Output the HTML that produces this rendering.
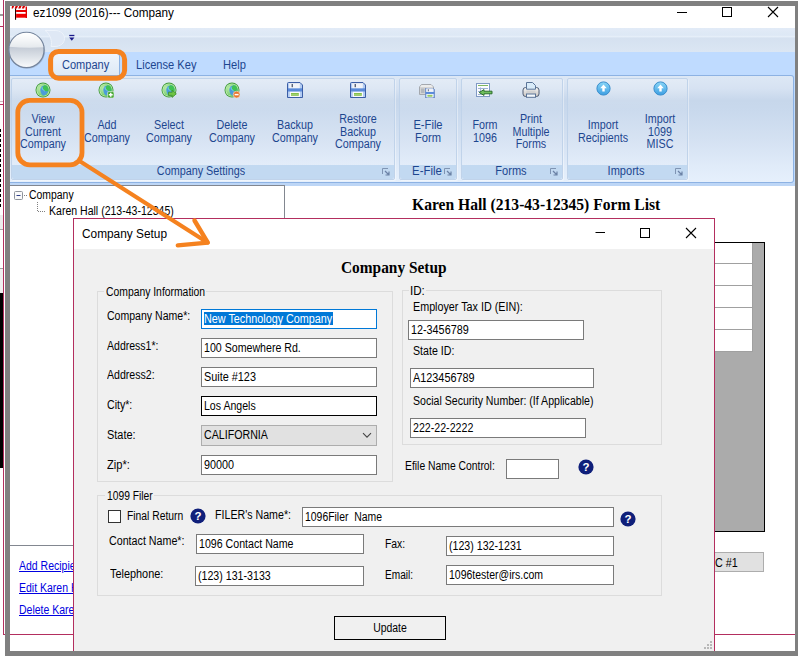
<!DOCTYPE html>
<html lang="en"><head><meta charset="utf-8"><title>ez1099 (2016)--- Company</title>
<style>
html,body{margin:0;padding:0;background:#fff}
#r{position:relative;width:798px;height:656px;overflow:hidden;background:#fff;font-family:"Liberation Sans",sans-serif;font-size:12px;color:#000}
#r>div,#r>svg,#r>span{position:absolute;display:block}
.t{white-space:nowrap;font-size:12px}
.ms{font-family:"Liberation Sans",sans-serif;color:#000}
.ui{font-family:"Liberation Sans",sans-serif;color:#000}
.rb{font-family:"Liberation Sans",sans-serif;color:#1d468f}
.hd{font-family:"Liberation Serif",serif;font-weight:bold;font-size:16px;color:#000}
.lk{color:#0000e0;text-decoration:underline}
</style></head>
<body><div id="r">
<div style="left:0px;top:0px;width:5px;height:656px;background:#fff"></div>
<div style="left:0px;top:14px;width:3px;height:2px;background:#9a9a9a"></div>
<div style="left:0px;top:26px;width:3px;height:1px;background:#b32e5e"></div>
<div style="left:0px;top:101px;width:3px;height:1px;background:#cdb8c0"></div>
<div style="left:0px;top:104px;width:3px;height:1px;background:#b32e5e"></div>
<div style="left:0px;top:129px;width:1px;height:80px;background:repeating-linear-gradient(to bottom,#000 0,#000 3px,#fff 3px,#fff 5px)"></div>
<div style="left:0px;top:215px;width:3px;height:14px;background:#ececec"></div>
<div style="left:0px;top:229px;width:3px;height:1px;background:#a8a8a8"></div>
<div style="left:0px;top:268px;width:3px;height:1px;background:#a0a0a0"></div>
<div style="left:0px;top:269px;width:3px;height:24px;background:#f0f0f0"></div>
<div style="left:0px;top:293px;width:3px;height:175px;background:#000"></div>
<div style="left:3px;top:0px;width:1px;height:635px;background:#b32e5e"></div>
<div style="left:5px;top:1px;width:793px;height:5px;background:#808080"></div>
<div style="left:5px;top:1px;width:5px;height:655px;background:#808080"></div>
<div style="left:5px;top:651px;width:793px;height:5px;background:#808080"></div>
<div style="left:795px;top:1px;width:3px;height:655px;background:#808080"></div>
<div style="left:10px;top:6px;width:785px;height:22px;background:#fff"></div>
<svg style="left:11px;top:5px" width="18" height="16" viewBox="0 0 18 16">
<path d="M1 1 h2.2 l-1.2 2.4 h-1.4 z M4.6 1 h2.4 l-1.2 2.4 h-2.2 z M8.2 1 h2.4 l-1.2 2.4 h-2.2 z M11.8 1 h2.4 l-1.2 2.4 h-2.2 z" fill="#d80000"/>
<rect x="4" y="3.4" width="1.1" height="11.4" fill="#2a0000"/>
<rect x="5.1" y="5" width="10.9" height="2" fill="#e60000"/>
<rect x="5.1" y="8.8" width="10.9" height="3.9" fill="#f20000"/>
<rect x="14.6" y="1.5" width="1.4" height="11.5" fill="#e00000"/>
</svg>
<span class="t ui" style="left:32.800000000000004px;top:6px;line-height:14px;transform:scaleX(0.9786);transform-origin:0 50%;">ez1099 (2016)--- Company</span>
<svg style="left:670px;top:6px" width="120" height="14" viewBox="0 0 120 14">
<path d="M7 6.5 H17" stroke="#000" stroke-width="1"/>
<rect x="52.5" y="1.5" width="9" height="9" fill="none" stroke="#000" stroke-width="1"/>
<path d="M98 1 L108 11 M108 1 L98 11" stroke="#000" stroke-width="1.1"/>
</svg>
<div style="left:10px;top:28px;width:785px;height:24px;background:linear-gradient(#e2ebf7 0,#dde8f5 30%,#e6eff9 36%,#d5e1f0 42%,#dbe6f3 100%)"></div>
<div style="left:10px;top:52px;width:785px;height:23px;background:#bfdbff"></div>
<div style="left:10px;top:75px;width:785px;height:111px;background:#bfdbff"></div>
<svg style="left:44px;top:29px" width="22" height="19" viewBox="0 0 22 19"><path d="M1 1.5 H11 C16.5 1.5 20.5 5 20.5 9.5 C20.5 14 16.5 17.5 11 17.5 H7 C8.5 13 6.5 5 1 1.5 Z" fill="#dfe8f5" stroke="#edf3fb" stroke-width="1"/></svg>
<svg style="left:69px;top:34px" width="6" height="8" viewBox="0 0 6 8"><path d="M0.2 1.5 H5.4" stroke="#1a1a8a" stroke-width="1.3"/><path d="M0.2 3.6 H5.4 L2.8 6.8 Z" fill="#1a1a8a"/></svg>
<div style="left:52px;top:53px;width:68px;height:23px;border:1px solid #8db2e3;border-bottom:none;border-radius:3px 3px 0 0;background:linear-gradient(#eef5fd,#dde8f5);box-sizing:border-box"></div>
<span class="t rb" style="left:62.2px;top:58px;line-height:14px;transform:scaleX(0.919);transform-origin:0 50%;">Company</span>
<span class="t rb" style="left:135.5px;top:58px;line-height:14px;transform:scaleX(0.925);transform-origin:0 50%;">License Key</span>
<span class="t rb" style="left:223px;top:58px;line-height:14px;transform:scaleX(0.93);transform-origin:0 50%;">Help</span>
<div style="left:10px;top:75px;width:784px;height:108px;border:1px solid #8db2e3;border-left:none;border-radius:0 3px 3px 0;box-sizing:border-box;background:linear-gradient(#dde8f5 0,#d6e2f2 12%,#c7d7eb 23%,#c9d9ed 34%,#d4e1f2 60%,#e0ebf9 85%,#e6f0fc 100%)"></div>
<div style="left:11px;top:78px;width:383.5px;height:101.5px;border:1px solid #c0d3ea;border-radius:2px;box-sizing:border-box;box-shadow:1px 1px 0 rgba(255,255,255,.4);background:linear-gradient(rgba(255,255,255,.22) 0,rgba(255,255,255,.12) 20%,rgba(255,255,255,.06) 30%,rgba(255,255,255,.1) 100%)"></div>
<div style="left:12px;top:164.5px;width:381.5px;height:14px;background:#c2d9f1;border-radius:0 0 2px 2px"></div>
<span class="t rb" style="left:200.5px;top:164px;line-height:14px;transform:translateX(-50%) scaleX(0.9);transform-origin:50% 50%;">Company Settings</span>
<svg style="left:381.5px;top:168px" width="8" height="8" viewBox="0 0 8 8"><path d="M0.5 6 V0.5 H6" stroke="#7f94b3" stroke-width="1" fill="none"/><path d="M3 3 L7 7 M7 3.5 V7 H3.5" stroke="#6b82a6" stroke-width="1.2" fill="none"/></svg>
<div style="left:398.5px;top:78px;width:58.0px;height:101.5px;border:1px solid #c0d3ea;border-radius:2px;box-sizing:border-box;box-shadow:1px 1px 0 rgba(255,255,255,.4);background:linear-gradient(rgba(255,255,255,.22) 0,rgba(255,255,255,.12) 20%,rgba(255,255,255,.06) 30%,rgba(255,255,255,.1) 100%)"></div>
<div style="left:399.5px;top:164.5px;width:56.0px;height:14px;background:#c2d9f1;border-radius:0 0 2px 2px"></div>
<span class="t rb" style="left:427px;top:164px;line-height:14px;transform:translateX(-50%) scaleX(0.95);transform-origin:50% 50%;">E-File</span>
<svg style="left:443.5px;top:168px" width="8" height="8" viewBox="0 0 8 8"><path d="M0.5 6 V0.5 H6" stroke="#7f94b3" stroke-width="1" fill="none"/><path d="M3 3 L7 7 M7 3.5 V7 H3.5" stroke="#6b82a6" stroke-width="1.2" fill="none"/></svg>
<div style="left:461px;top:78px;width:101.5px;height:101.5px;border:1px solid #c0d3ea;border-radius:2px;box-sizing:border-box;box-shadow:1px 1px 0 rgba(255,255,255,.4);background:linear-gradient(rgba(255,255,255,.22) 0,rgba(255,255,255,.12) 20%,rgba(255,255,255,.06) 30%,rgba(255,255,255,.1) 100%)"></div>
<div style="left:462px;top:164.5px;width:99.5px;height:14px;background:#c2d9f1;border-radius:0 0 2px 2px"></div>
<span class="t rb" style="left:510.6px;top:164px;line-height:14px;transform:translateX(-50%) scaleX(0.92);transform-origin:50% 50%;">Forms</span>
<svg style="left:549.5px;top:168px" width="8" height="8" viewBox="0 0 8 8"><path d="M0.5 6 V0.5 H6" stroke="#7f94b3" stroke-width="1" fill="none"/><path d="M3 3 L7 7 M7 3.5 V7 H3.5" stroke="#6b82a6" stroke-width="1.2" fill="none"/></svg>
<div style="left:567px;top:78px;width:120.5px;height:101.5px;border:1px solid #c0d3ea;border-radius:2px;box-sizing:border-box;box-shadow:1px 1px 0 rgba(255,255,255,.4);background:linear-gradient(rgba(255,255,255,.22) 0,rgba(255,255,255,.12) 20%,rgba(255,255,255,.06) 30%,rgba(255,255,255,.1) 100%)"></div>
<div style="left:568px;top:164.5px;width:118.5px;height:14px;background:#c2d9f1;border-radius:0 0 2px 2px"></div>
<span class="t rb" style="left:626px;top:164px;line-height:14px;transform:translateX(-50%) scaleX(0.92);transform-origin:50% 50%;">Imports</span>
<svg style="left:674.5px;top:168px" width="8" height="8" viewBox="0 0 8 8"><path d="M0.5 6 V0.5 H6" stroke="#7f94b3" stroke-width="1" fill="none"/><path d="M3 3 L7 7 M7 3.5 V7 H3.5" stroke="#6b82a6" stroke-width="1.2" fill="none"/></svg>
<div class="t rb" style="left:43.3px;top:113.0px;line-height:12.6px;text-align:center;transform:translateX(-50%) scaleX(0.895);transform-origin:50% 50%">View<br>Current<br>Company</div>
<div class="t rb" style="left:106.5px;top:119.30000000000001px;line-height:12.6px;text-align:center;transform:translateX(-50%) scaleX(0.895);transform-origin:50% 50%">Add<br>Company</div>
<div class="t rb" style="left:169px;top:119.30000000000001px;line-height:12.6px;text-align:center;transform:translateX(-50%) scaleX(0.895);transform-origin:50% 50%">Select<br>Company</div>
<div class="t rb" style="left:232px;top:119.30000000000001px;line-height:12.6px;text-align:center;transform:translateX(-50%) scaleX(0.895);transform-origin:50% 50%">Delete<br>Company</div>
<div class="t rb" style="left:295px;top:119.30000000000001px;line-height:12.6px;text-align:center;transform:translateX(-50%) scaleX(0.895);transform-origin:50% 50%">Backup<br>Company</div>
<div class="t rb" style="left:358px;top:113.0px;line-height:12.6px;text-align:center;transform:translateX(-50%) scaleX(0.895);transform-origin:50% 50%">Restore<br>Backup<br>Company</div>
<div class="t rb" style="left:427.5px;top:119.30000000000001px;line-height:12.6px;text-align:center;transform:translateX(-50%) scaleX(0.93);transform-origin:50% 50%">E-File<br>Form</div>
<div class="t rb" style="left:484.5px;top:119.30000000000001px;line-height:12.6px;text-align:center;transform:translateX(-50%) scaleX(0.895);transform-origin:50% 50%">Form<br>1096</div>
<div class="t rb" style="left:531px;top:113.0px;line-height:12.6px;text-align:center;transform:translateX(-50%) scaleX(0.895);transform-origin:50% 50%">Print<br>Multiple<br>Forms</div>
<div class="t rb" style="left:603.4px;top:119.30000000000001px;line-height:12.6px;text-align:center;transform:translateX(-50%) scaleX(0.895);transform-origin:50% 50%">Import<br>Recipients</div>
<div class="t rb" style="left:659.5px;top:113.0px;line-height:12.6px;text-align:center;transform:translateX(-50%) scaleX(0.895);transform-origin:50% 50%">Import<br>1099<br>MISC</div>
<svg width="0" height="0" style="position:absolute"><defs>
<radialGradient id="gg" cx="30%" cy="35%" r="80%"><stop offset="0" stop-color="#bdecac"/><stop offset="1" stop-color="#63c561"/></radialGradient>
<linearGradient id="ct" x1="1" y1="0" x2="0.2" y2="1"><stop offset="0" stop-color="#35b843"/><stop offset="0.35" stop-color="#3fae6e"/><stop offset="0.6" stop-color="#4a9bd6"/><stop offset="1" stop-color="#3f8fd2"/></linearGradient>
<linearGradient id="bl" x1="0" y1="0" x2="0" y2="1"><stop offset="0" stop-color="#8ad6f7"/><stop offset="1" stop-color="#3d9fe2"/></linearGradient>
<linearGradient id="fl" x1="0" y1="0" x2="0" y2="1"><stop offset="0" stop-color="#5d8fe0"/><stop offset="1" stop-color="#80aaf0"/></linearGradient>
</defs></svg>
<svg style="left:35px;top:82px" width="16" height="16" viewBox="0 0 16 16">
<circle cx="8" cy="8" r="7.5" fill="#3f993b"/>
<circle cx="8" cy="8" r="6.6" fill="#c6efb0"/>
<circle cx="8" cy="8" r="5.9" fill="url(#gg)"/>
<path d="M6.2 5 C7.5 3.6 9.5 3.2 11 3.6 C12.6 4.6 13.4 6.4 13.4 8 C13.2 9.6 12.6 10.8 11.6 11.8 C10.8 12.8 9.6 13.4 8.4 13.4 C7.2 13.2 6.4 12.2 6 11 C5.4 9.6 5.2 8 5.4 6.8 Z" fill="#4b9cd9"/>
<path d="M9.2 3.4 C10.6 3.2 12 4 12.8 5.2 C13.4 6.4 13.6 7.8 13.2 9 C12.2 9.6 10.8 9.4 9.8 8.8 C8.6 8 7.6 7 7.6 6 C7.8 4.8 8.4 3.8 9.2 3.4 Z" fill="#3ec354"/>
<path d="M7 5.2 C7 6.6 8 8 9.6 9" stroke="#8edbe6" stroke-width="1" fill="none" opacity=".85"/>
</svg>
<svg style="left:98px;top:82px" width="16" height="16" viewBox="0 0 16 16">
<circle cx="8" cy="8" r="7.5" fill="#3f993b"/>
<circle cx="8" cy="8" r="6.6" fill="#c6efb0"/>
<circle cx="8" cy="8" r="5.9" fill="url(#gg)"/>
<path d="M6.2 5 C7.5 3.6 9.5 3.2 11 3.6 C12.6 4.6 13.4 6.4 13.4 8 C13.2 9.6 12.6 10.8 11.6 11.8 C10.8 12.8 9.6 13.4 8.4 13.4 C7.2 13.2 6.4 12.2 6 11 C5.4 9.6 5.2 8 5.4 6.8 Z" fill="#4b9cd9"/>
<path d="M9.2 3.4 C10.6 3.2 12 4 12.8 5.2 C13.4 6.4 13.6 7.8 13.2 9 C12.2 9.6 10.8 9.4 9.8 8.8 C8.6 8 7.6 7 7.6 6 C7.8 4.8 8.4 3.8 9.2 3.4 Z" fill="#3ec354"/>
<path d="M7 5.2 C7 6.6 8 8 9.6 9" stroke="#8edbe6" stroke-width="1" fill="none" opacity=".85"/>
<rect x="9.5" y="9.5" width="6.5" height="6.5" rx="1.5" fill="#4aa83a" stroke="#dff5d5" stroke-width=".6"/><path d="M12.75 10.8 V14.7 M10.8 12.75 H14.7" stroke="#fff" stroke-width="1.4"/></svg>
<svg style="left:161px;top:82px" width="16" height="16" viewBox="0 0 16 16">
<circle cx="8" cy="8" r="7.5" fill="#3f993b"/>
<circle cx="8" cy="8" r="6.6" fill="#c6efb0"/>
<circle cx="8" cy="8" r="5.9" fill="url(#gg)"/>
<path d="M6.2 5 C7.5 3.6 9.5 3.2 11 3.6 C12.6 4.6 13.4 6.4 13.4 8 C13.2 9.6 12.6 10.8 11.6 11.8 C10.8 12.8 9.6 13.4 8.4 13.4 C7.2 13.2 6.4 12.2 6 11 C5.4 9.6 5.2 8 5.4 6.8 Z" fill="#4b9cd9"/>
<path d="M9.2 3.4 C10.6 3.2 12 4 12.8 5.2 C13.4 6.4 13.6 7.8 13.2 9 C12.2 9.6 10.8 9.4 9.8 8.8 C8.6 8 7.6 7 7.6 6 C7.8 4.8 8.4 3.8 9.2 3.4 Z" fill="#3ec354"/>
<path d="M7 5.2 C7 6.6 8 8 9.6 9" stroke="#8edbe6" stroke-width="1" fill="none" opacity=".85"/>
<path d="M7.5 10.2 H11.2 V8.2 L15.3 11.8 L11.2 15.4 V13.4 H7.5 Z" fill="#6fc445" stroke="#3d8f2c" stroke-width=".8"/></svg>
<svg style="left:224px;top:82px" width="16" height="16" viewBox="0 0 16 16">
<circle cx="8" cy="8" r="7.5" fill="#3f993b"/>
<circle cx="8" cy="8" r="6.6" fill="#c6efb0"/>
<circle cx="8" cy="8" r="5.9" fill="url(#gg)"/>
<path d="M6.2 5 C7.5 3.6 9.5 3.2 11 3.6 C12.6 4.6 13.4 6.4 13.4 8 C13.2 9.6 12.6 10.8 11.6 11.8 C10.8 12.8 9.6 13.4 8.4 13.4 C7.2 13.2 6.4 12.2 6 11 C5.4 9.6 5.2 8 5.4 6.8 Z" fill="#4b9cd9"/>
<path d="M9.2 3.4 C10.6 3.2 12 4 12.8 5.2 C13.4 6.4 13.6 7.8 13.2 9 C12.2 9.6 10.8 9.4 9.8 8.8 C8.6 8 7.6 7 7.6 6 C7.8 4.8 8.4 3.8 9.2 3.4 Z" fill="#3ec354"/>
<path d="M7 5.2 C7 6.6 8 8 9.6 9" stroke="#8edbe6" stroke-width="1" fill="none" opacity=".85"/>
<circle cx="12.6" cy="12.6" r="3.4" fill="#e8762c" stroke="#fbe0c8" stroke-width=".6"/><path d="M10.6 12.6 H14.6" stroke="#fff" stroke-width="1.5"/></svg>
<svg style="left:287px;top:82px" width="16" height="16" viewBox="0 0 16 16">
<path d="M1.5 0.5 H13 L15.5 3 V15.5 H0.5 V1.5 Q0.5 0.5 1.5 0.5 Z" fill="#b3ccf2" stroke="#3b5ea6" stroke-width="1"/>
<rect x="1" y="6.3" width="14" height="3.2" fill="#5a8ad9"/>
<rect x="2.2" y="1" width="10.6" height="5.2" fill="#f1f3f8"/>
<rect x="2.2" y="1" width="10.6" height="1" fill="#dfe4ee"/>
<rect x="4.6" y="2" width="1.3" height="3.2" fill="#4b566c"/>
<rect x="2.8" y="9.8" width="10.2" height="5.2" fill="#f8fafc"/>
<rect x="4" y="11" width="7.8" height="2.8" fill="#84c04a"/>
<rect x="4" y="12.1" width="7.8" height="0.6" fill="#b4dc8a"/>
</svg>
<svg style="left:350px;top:82px" width="16" height="16" viewBox="0 0 16 16">
<path d="M1.5 0.5 H13 L15.5 3 V15.5 H0.5 V1.5 Q0.5 0.5 1.5 0.5 Z" fill="#b3ccf2" stroke="#3b5ea6" stroke-width="1"/>
<rect x="1" y="6.3" width="14" height="3.2" fill="#5a8ad9"/>
<rect x="2.2" y="1" width="10.6" height="5.2" fill="#f1f3f8"/>
<rect x="2.2" y="1" width="10.6" height="1" fill="#dfe4ee"/>
<rect x="4.6" y="2" width="1.3" height="3.2" fill="#4b566c"/>
<rect x="2.8" y="9.8" width="10.2" height="5.2" fill="#f8fafc"/>
<rect x="4" y="11" width="7.8" height="2.8" fill="#84c04a"/>
<rect x="4" y="12.1" width="7.8" height="0.6" fill="#b4dc8a"/>
</svg>
<svg style="left:419px;top:83px" width="16" height="13" viewBox="0 0 16 13">
<path d="M2.5 1.5 H12 L14.5 4 V11.5 H0.5 V4 Z" fill="#d4d4d4" stroke="#a4a8ae" stroke-width="1"/>
<path d="M2.6 2 H12 L14 4 H1 Z" fill="#ececec"/>
<rect x="2" y="5.5" width="3.5" height="4.5" fill="#b4b8be"/>
</svg>
<svg style="left:425px;top:88px" width="10" height="10" viewBox="0 0 16 16">
<path d="M1.5 0.5 H13 L15.5 3 V15.5 H0.5 V1.5 Q0.5 0.5 1.5 0.5 Z" fill="#b3ccf2" stroke="#3b5ea6" stroke-width="1"/>
<rect x="1" y="6.3" width="14" height="3.2" fill="#5a8ad9"/>
<rect x="2.2" y="1" width="10.6" height="5.2" fill="#f1f3f8"/>
<rect x="2.2" y="1" width="10.6" height="1" fill="#dfe4ee"/>
<rect x="4.6" y="2" width="1.3" height="3.2" fill="#4b566c"/>
<rect x="2.8" y="9.8" width="10.2" height="5.2" fill="#f8fafc"/>
<rect x="4" y="11" width="7.8" height="2.8" fill="#84c04a"/>
<rect x="4" y="12.1" width="7.8" height="0.6" fill="#b4dc8a"/>
</svg>
<svg style="left:476px;top:83px" width="17" height="15" viewBox="0 0 17 15">
<rect x="0.5" y="0.5" width="13" height="13" fill="#fbfcfe" stroke="#7f9ac4" stroke-width="1"/>
<path d="M2 2.5 H12" stroke="#7fb860" stroke-width="1"/>
<path d="M2 5.5 H12 M2 8.5 H5 M2 11.5 H6 M4.5 4.5 V12" stroke="#9fb2d6" stroke-width="1"/>
<path d="M16 8.2 H8 V6.6 L3.2 9.5 L8 12.4 V10.8 H16 Z" fill="#6fbf5c" stroke="#2d6e2d" stroke-width="1"/>
</svg>
<svg style="left:522px;top:81px" width="18" height="17" viewBox="0 0 18 17">
<defs><linearGradient id="pb" x1="0" y1="0" x2="0" y2="1"><stop offset="0" stop-color="#f6f6f6"/><stop offset="1" stop-color="#c9c5c0"/></linearGradient></defs>
<rect x="1" y="6.5" width="16" height="9" rx="2.6" fill="url(#pb)" stroke="#4f5d75" stroke-width="1"/>
<path d="M4.5 8.2 V1.5 H10.5 L13.5 4.5 V8.2 Z" fill="#d9ebf9" stroke="#5a7498" stroke-width="1"/>
<rect x="4.5" y="9.6" width="9" height="2.8" fill="#d2d2d2"/>
<rect x="4.5" y="13" width="9" height="3.3" fill="#f4f9fd" stroke="#5a7498" stroke-width="1"/>
</svg>
<svg style="left:595.5px;top:81.4px" width="15" height="15" viewBox="0 0 15 15">
<circle cx="7.5" cy="7.5" r="6.6" fill="url(#bl)" stroke="#3a8ecd" stroke-width="1"/>
<path d="M7.5 3.6 L10.8 7.2 H8.7 V10.6 H6.3 V7.2 H4.2 Z" fill="#fff"/>
</svg>
<svg style="left:652.6px;top:81.4px" width="15" height="15" viewBox="0 0 15 15">
<circle cx="7.5" cy="7.5" r="6.6" fill="url(#bl)" stroke="#3a8ecd" stroke-width="1"/>
<path d="M7.5 3.6 L10.8 7.2 H8.7 V10.6 H6.3 V7.2 H4.2 Z" fill="#fff"/>
</svg>
<svg style="left:6px;top:29px" width="42" height="42" viewBox="0 0 42 42">
<defs>
<linearGradient id="o1" gradientUnits="userSpaceOnUse" x1="0" y1="4" x2="0" y2="19"><stop offset="0" stop-color="#ffffff"/><stop offset="0.5" stop-color="#f3f5f7"/><stop offset="1" stop-color="#e4e8ec"/></linearGradient>
<linearGradient id="o2" gradientUnits="userSpaceOnUse" x1="0" y1="18" x2="0" y2="38"><stop offset="0" stop-color="#c3cad5"/><stop offset="0.5" stop-color="#dde2e8"/><stop offset="1" stop-color="#f8f9fb"/></linearGradient>
<clipPath id="oc"><circle cx="20.5" cy="21" r="17.2"/></clipPath>
</defs>
<circle cx="21.2" cy="21.8" r="18" fill="#7f8fa8" opacity=".35"/>
<circle cx="20.5" cy="21" r="17.6" fill="url(#o2)" stroke="#75859d" stroke-width="1.3"/>
<path d="M0 0 H42 V18 Q20.5 19.6 0 17.4 Z" fill="url(#o1)" clip-path="url(#oc)"/>
</svg>
<div style="left:10px;top:183px;width:785px;height:3px;background:#bdd6f6"></div>
<div style="left:10px;top:186px;width:785px;height:465px;background:#fff"></div>
<div style="left:10px;top:185px;width:275px;height:361px;border:1px solid #828790;border-left:none;box-sizing:border-box;background:#fff"></div>
<svg style="left:14px;top:191px" width="40" height="24" viewBox="0 0 40 24">
<rect x="0.5" y="0.5" width="8" height="8" rx="1" fill="#fafafa" stroke="#8e949c"/>
<path d="M2.5 4.5 H6.5" stroke="#30408a" stroke-width="1"/>
<rect x="10" y="4" width="1" height="1" fill="#808080"/><rect x="12" y="4" width="1" height="1" fill="#808080"/>
<path d="M23.5 11 V20 M24 20.5 H32" stroke="#808080" stroke-width="1" stroke-dasharray="1 1" fill="none"/>
</svg>
<span class="t ms" style="left:29.3px;top:188px;line-height:14px;transform:scaleX(0.8684);transform-origin:0 50%;">Company</span>
<span class="t ms" style="left:48.800000000000004px;top:204px;line-height:14px;transform:scaleX(0.8783);transform-origin:0 50%;">Karen Hall (213-43-12345)</span>
<span class="t ms lk" style="left:19.2px;top:559px;line-height:14px;transform:scaleX(0.875);transform-origin:0 50%;">Add Recipient</span>
<span class="t ms lk" style="left:19.2px;top:581px;line-height:14px;transform:scaleX(0.875);transform-origin:0 50%;">Edit Karen Hall</span>
<span class="t ms lk" style="left:19.2px;top:603px;line-height:14px;transform:scaleX(0.875);transform-origin:0 50%;">Delete Karen Hall</span>
<span class="t hd" style="left:411.90000000000003px;top:196px;line-height:18px;transform:scaleX(0.9746);transform-origin:0 50%;">Karen Hall (213-43-12345) Form List</span>
<div style="left:300px;top:242px;width:465px;height:290px;background:#ababab;border:1px solid #000;box-sizing:border-box"></div>
<div style="left:301px;top:243px;width:452px;height:20px;background:#fff"></div>
<div style="left:301px;top:264px;width:452px;height:21px;background:#fff"></div>
<div style="left:301px;top:286px;width:452px;height:21px;background:#fff"></div>
<div style="left:301px;top:308px;width:452px;height:21px;background:#fff"></div>
<div style="left:301px;top:330px;width:452px;height:21px;background:#fff"></div>
<div style="left:301px;top:263px;width:452px;height:1px;background:#a0a0a0"></div>
<div style="left:301px;top:285px;width:452px;height:1px;background:#a0a0a0"></div>
<div style="left:301px;top:307px;width:452px;height:1px;background:#a0a0a0"></div>
<div style="left:301px;top:329px;width:452px;height:1px;background:#a0a0a0"></div>
<div style="left:301px;top:351px;width:452px;height:1px;background:#a0a0a0"></div>
<div style="left:752px;top:243px;width:1px;height:109px;background:#a0a0a0"></div>
<div style="left:640px;top:552px;width:124px;height:20px;background:#e1e1e1;border:1px solid #adadad;box-sizing:border-box"></div>
<span class="t ms" style="left:714.6px;top:556px;line-height:14px;transform:scaleX(0.9);transform-origin:0 50%;">C #1</span>
<div style="left:10px;top:634px;width:64px;height:1px;background:#b32e5e"></div>
<div style="left:3px;top:634px;width:2px;height:1px;background:#b32e5e"></div>
<div style="left:714px;top:634px;width:81px;height:1px;background:#b32e5e"></div>
<div style="left:73px;top:218px;width:642px;height:433px;background:#f0f0f0;border:1px solid #b32e5e;border-bottom:none;box-sizing:border-box"></div>
<div style="left:74px;top:219px;width:640px;height:30px;background:#fff"></div>
<span class="t ui" style="left:82.1px;top:227px;line-height:14px;transform:scaleX(0.9877);transform-origin:0 50%;">Company Setup</span>
<svg style="left:590px;top:226px" width="112" height="14" viewBox="0 0 112 14">
<path d="M5.5 6.5 H15" stroke="#000" stroke-width="1"/>
<rect x="50.5" y="2.5" width="9" height="9" fill="none" stroke="#000" stroke-width="1"/>
<path d="M96 2 L106 12 M106 2 L96 12" stroke="#000" stroke-width="1.1"/>
</svg>
<span class="t hd" style="left:341.0px;top:259px;line-height:18px;transform:scaleX(0.9608);transform-origin:0 50%;">Company Setup</span>
<div style="left:97px;top:291px;width:296px;height:191px;border:1px solid #dcdcdc;box-sizing:border-box"></div>
<div style="left:103.9px;top:290px;width:102.1px;height:3px;background:#f0f0f0"></div>
<span class="t ms" style="left:105.5px;top:285px;line-height:14px;transform:scaleX(0.8638);transform-origin:0 50%;">Company Information</span>
<span class="t ms" style="left:107.1px;top:309px;line-height:14px;transform:scaleX(0.8784);transform-origin:0 50%;">Company Name*:</span>
<span class="t ms" style="left:107.1px;top:339px;line-height:14px;transform:scaleX(0.8773);transform-origin:0 50%;">Address1*:</span>
<span class="t ms" style="left:107.1px;top:368px;line-height:14px;transform:scaleX(0.881);transform-origin:0 50%;">Address2:</span>
<span class="t ms" style="left:107.1px;top:398px;line-height:14px;transform:scaleX(0.8825);transform-origin:0 50%;">City*:</span>
<span class="t ms" style="left:107.1px;top:428px;line-height:14px;transform:scaleX(0.912);transform-origin:0 50%;">State:</span>
<span class="t ms" style="left:107.1px;top:458px;line-height:14px;transform:scaleX(0.9235);transform-origin:0 50%;">Zip*:</span>
<div style="left:201px;top:309px;width:176px;height:20px;border:1px solid #0078d7;box-sizing:border-box;background:#fff"></div>
<div style="left:204px;top:312px;width:129px;height:13px;background:#0078d7"></div>
<span class="t ms" style="left:204.2px;top:312px;line-height:14px;transform:scaleX(0.9);transform-origin:0 50%;color:#fff">New Technology Company</span>
<div style="left:201px;top:338px;width:176px;height:20px;border:1px solid #7a7a7a;box-sizing:border-box;background:#fff"></div>
<span class="t ms" style="left:204.2px;top:341px;line-height:14px;transform:scaleX(0.885);transform-origin:0 50%;">100 Somewhere Rd.</span>
<div style="left:201px;top:367px;width:176px;height:20px;border:1px solid #7a7a7a;box-sizing:border-box;background:#fff"></div>
<span class="t ms" style="left:204.2px;top:370px;line-height:14px;transform:scaleX(0.905);transform-origin:0 50%;">Suite #123</span>
<div style="left:201px;top:396px;width:176px;height:20px;border:1px solid #000;box-sizing:border-box;background:#fff"></div>
<span class="t ms" style="left:204.2px;top:399px;line-height:14px;transform:scaleX(0.88);transform-origin:0 50%;">Los Angels</span>
<div style="left:201px;top:425px;width:176px;height:21px;border:1px solid #adadad;box-sizing:border-box;background:#e1e1e1"></div>
<span class="t ms" style="left:204.2px;top:428px;line-height:14px;transform:scaleX(0.887);transform-origin:0 50%;">CALIFORNIA</span>
<svg style="left:362px;top:432px" width="10" height="7" viewBox="0 0 10 7"><path d="M1 1.2 L5 5.2 L9 1.2" stroke="#444" stroke-width="1.1" fill="none"/></svg>
<div style="left:201px;top:455px;width:176px;height:20px;border:1px solid #7a7a7a;box-sizing:border-box;background:#fff"></div>
<span class="t ms" style="left:204.2px;top:458px;line-height:14px;transform:scaleX(0.9);transform-origin:0 50%;">90000</span>
<div style="left:402px;top:290px;width:260px;height:155px;border:1px solid #dcdcdc;box-sizing:border-box"></div>
<div style="left:408.5px;top:289px;width:17.80000000000001px;height:3px;background:#f0f0f0"></div>
<span class="t ms" style="left:410.1px;top:284px;line-height:14px;transform:scaleX(0.9648);transform-origin:0 50%;">ID:</span>
<span class="t ms" style="left:413.20000000000005px;top:300px;line-height:14px;transform:scaleX(0.8965);transform-origin:0 50%;">Employer Tax ID (EIN):</span>
<div style="left:408px;top:320px;width:176px;height:20px;border:1px solid #7a7a7a;box-sizing:border-box;background:#fff"></div>
<span class="t ms" style="left:411.2px;top:323px;line-height:14px;transform:scaleX(0.9);transform-origin:0 50%;">12-3456789</span>
<span class="t ms" style="left:413.20000000000005px;top:344px;line-height:14px;transform:scaleX(0.8867);transform-origin:0 50%;">State ID:</span>
<div style="left:410px;top:368px;width:184px;height:20px;border:1px solid #7a7a7a;box-sizing:border-box;background:#fff"></div>
<span class="t ms" style="left:413.2px;top:371px;line-height:14px;transform:scaleX(0.905);transform-origin:0 50%;">A123456789</span>
<span class="t ms" style="left:413.20000000000005px;top:394px;line-height:14px;transform:scaleX(0.8811);transform-origin:0 50%;">Social Security Number: (If Applicable)</span>
<div style="left:410px;top:418px;width:176px;height:20px;border:1px solid #7a7a7a;box-sizing:border-box;background:#fff"></div>
<span class="t ms" style="left:413.2px;top:421px;line-height:14px;transform:scaleX(0.886);transform-origin:0 50%;">222-22-2222</span>
<span class="t ms" style="left:405.20000000000005px;top:459px;line-height:14px;transform:scaleX(0.863);transform-origin:0 50%;">Efile Name Control:</span>
<div style="left:506px;top:459px;width:53px;height:20px;border:1px solid #7a7a7a;box-sizing:border-box;background:#fff"></div>
<svg style="left:578px;top:459.2px" width="16" height="16" viewBox="0 0 16 16"><circle cx="8" cy="8" r="7.6" fill="#0f1f7a"/><text x="8" y="12.2" text-anchor="middle" font-family="Liberation Sans, sans-serif" font-weight="bold" font-size="11.5" fill="#fff">?</text></svg>
<div style="left:97px;top:495px;width:565px;height:101px;border:1px solid #dcdcdc;box-sizing:border-box"></div>
<div style="left:104.9px;top:494px;width:48.69999999999999px;height:3px;background:#f0f0f0"></div>
<span class="t ms" style="left:106.5px;top:489px;line-height:14px;transform:scaleX(0.8561);transform-origin:0 50%;">1099 Filer</span>
<div style="left:108px;top:510px;width:13px;height:13px;border:1px solid #333;box-sizing:border-box;background:#fff"></div>
<span class="t ms" style="left:127.39999999999999px;top:509px;line-height:14px;transform:scaleX(0.8611);transform-origin:0 50%;">Final Return</span>
<svg style="left:190px;top:508.20000000000005px" width="16" height="16" viewBox="0 0 16 16"><circle cx="8" cy="8" r="7.6" fill="#0f1f7a"/><text x="8" y="12.2" text-anchor="middle" font-family="Liberation Sans, sans-serif" font-weight="bold" font-size="11.5" fill="#fff">?</text></svg>
<span class="t ms" style="left:214.6px;top:508px;line-height:14px;transform:scaleX(0.8872);transform-origin:0 50%;">FILER's Name*:</span>
<div style="left:302px;top:507px;width:312px;height:20px;border:1px solid #7a7a7a;box-sizing:border-box;background:#fff"></div>
<span class="t ms" style="left:305.2px;top:510px;line-height:14px;transform:scaleX(0.868);transform-origin:0 50%;">1096Filer&nbsp; Name</span>
<svg style="left:620px;top:511px" width="16" height="16" viewBox="0 0 16 16"><circle cx="8" cy="8" r="7.6" fill="#0f1f7a"/><text x="8" y="12.2" text-anchor="middle" font-family="Liberation Sans, sans-serif" font-weight="bold" font-size="11.5" fill="#fff">?</text></svg>
<span class="t ms" style="left:108.6px;top:534px;line-height:14px;transform:scaleX(0.8914);transform-origin:0 50%;">Contact Name*:</span>
<div style="left:196px;top:534px;width:168px;height:20px;border:1px solid #7a7a7a;box-sizing:border-box;background:#fff"></div>
<span class="t ms" style="left:199.2px;top:537px;line-height:14px;transform:scaleX(0.885);transform-origin:0 50%;">1096 Contact Name</span>
<span class="t ms" style="left:385.0px;top:537px;line-height:14px;transform:scaleX(0.8655);transform-origin:0 50%;">Fax:</span>
<div style="left:446px;top:536px;width:168px;height:20px;border:1px solid #7a7a7a;box-sizing:border-box;background:#fff"></div>
<span class="t ms" style="left:449.2px;top:539px;line-height:14px;transform:scaleX(0.886);transform-origin:0 50%;">(123) 132-1231</span>
<span class="t ms" style="left:109.8px;top:567px;line-height:14px;transform:scaleX(0.9077);transform-origin:0 50%;">Telephone:</span>
<div style="left:195px;top:566px;width:169px;height:20px;border:1px solid #7a7a7a;box-sizing:border-box;background:#fff"></div>
<span class="t ms" style="left:198.2px;top:569px;line-height:14px;transform:scaleX(0.886);transform-origin:0 50%;">(123) 131-3133</span>
<span class="t ms" style="left:385.0px;top:568px;line-height:14px;transform:scaleX(0.8428);transform-origin:0 50%;">Email:</span>
<div style="left:446px;top:565px;width:168px;height:20px;border:1px solid #7a7a7a;box-sizing:border-box;background:#fff"></div>
<span class="t ms" style="left:449.2px;top:568px;line-height:14px;transform:scaleX(0.874);transform-origin:0 50%;">1096tester@irs.com</span>
<div style="left:334px;top:616px;width:112px;height:24px;border:1px solid #000;box-sizing:border-box;background:#f0f0f0"></div>
<span class="t ms" style="left:389.5px;top:621px;line-height:14px;transform:translateX(-50%) scaleX(0.87);transform-origin:50% 50%;">Update</span>
<svg style="left:704px;top:641px" width="9" height="9" viewBox="0 0 9 9"><g fill="#b8b8b8"><rect x="6" y="0" width="2" height="2"/><rect x="3" y="3" width="2" height="2"/><rect x="6" y="3" width="2" height="2"/><rect x="0" y="6" width="2" height="2"/><rect x="3" y="6" width="2" height="2"/><rect x="6" y="6" width="2" height="2"/></g></svg>
<svg style="left:0;top:0" width="798" height="656" viewBox="0 0 798 656">
<g fill="none" stroke="#f5821f" stroke-linecap="round" stroke-linejoin="round">
<rect x="50.6" y="51.5" width="74" height="26.7" rx="8" ry="8" stroke-width="5"/>
<rect x="17.8" y="100.4" width="64.2" height="64.4" rx="12" ry="12" stroke-width="4.8"/>
<path d="M79.5 161 L207.5 242.5" stroke-width="4"/>
<path d="M194.5 220.5 L207.8 242.6 L177.8 245.4" stroke-width="4.4"/>
</g></svg>
</div></body></html>
